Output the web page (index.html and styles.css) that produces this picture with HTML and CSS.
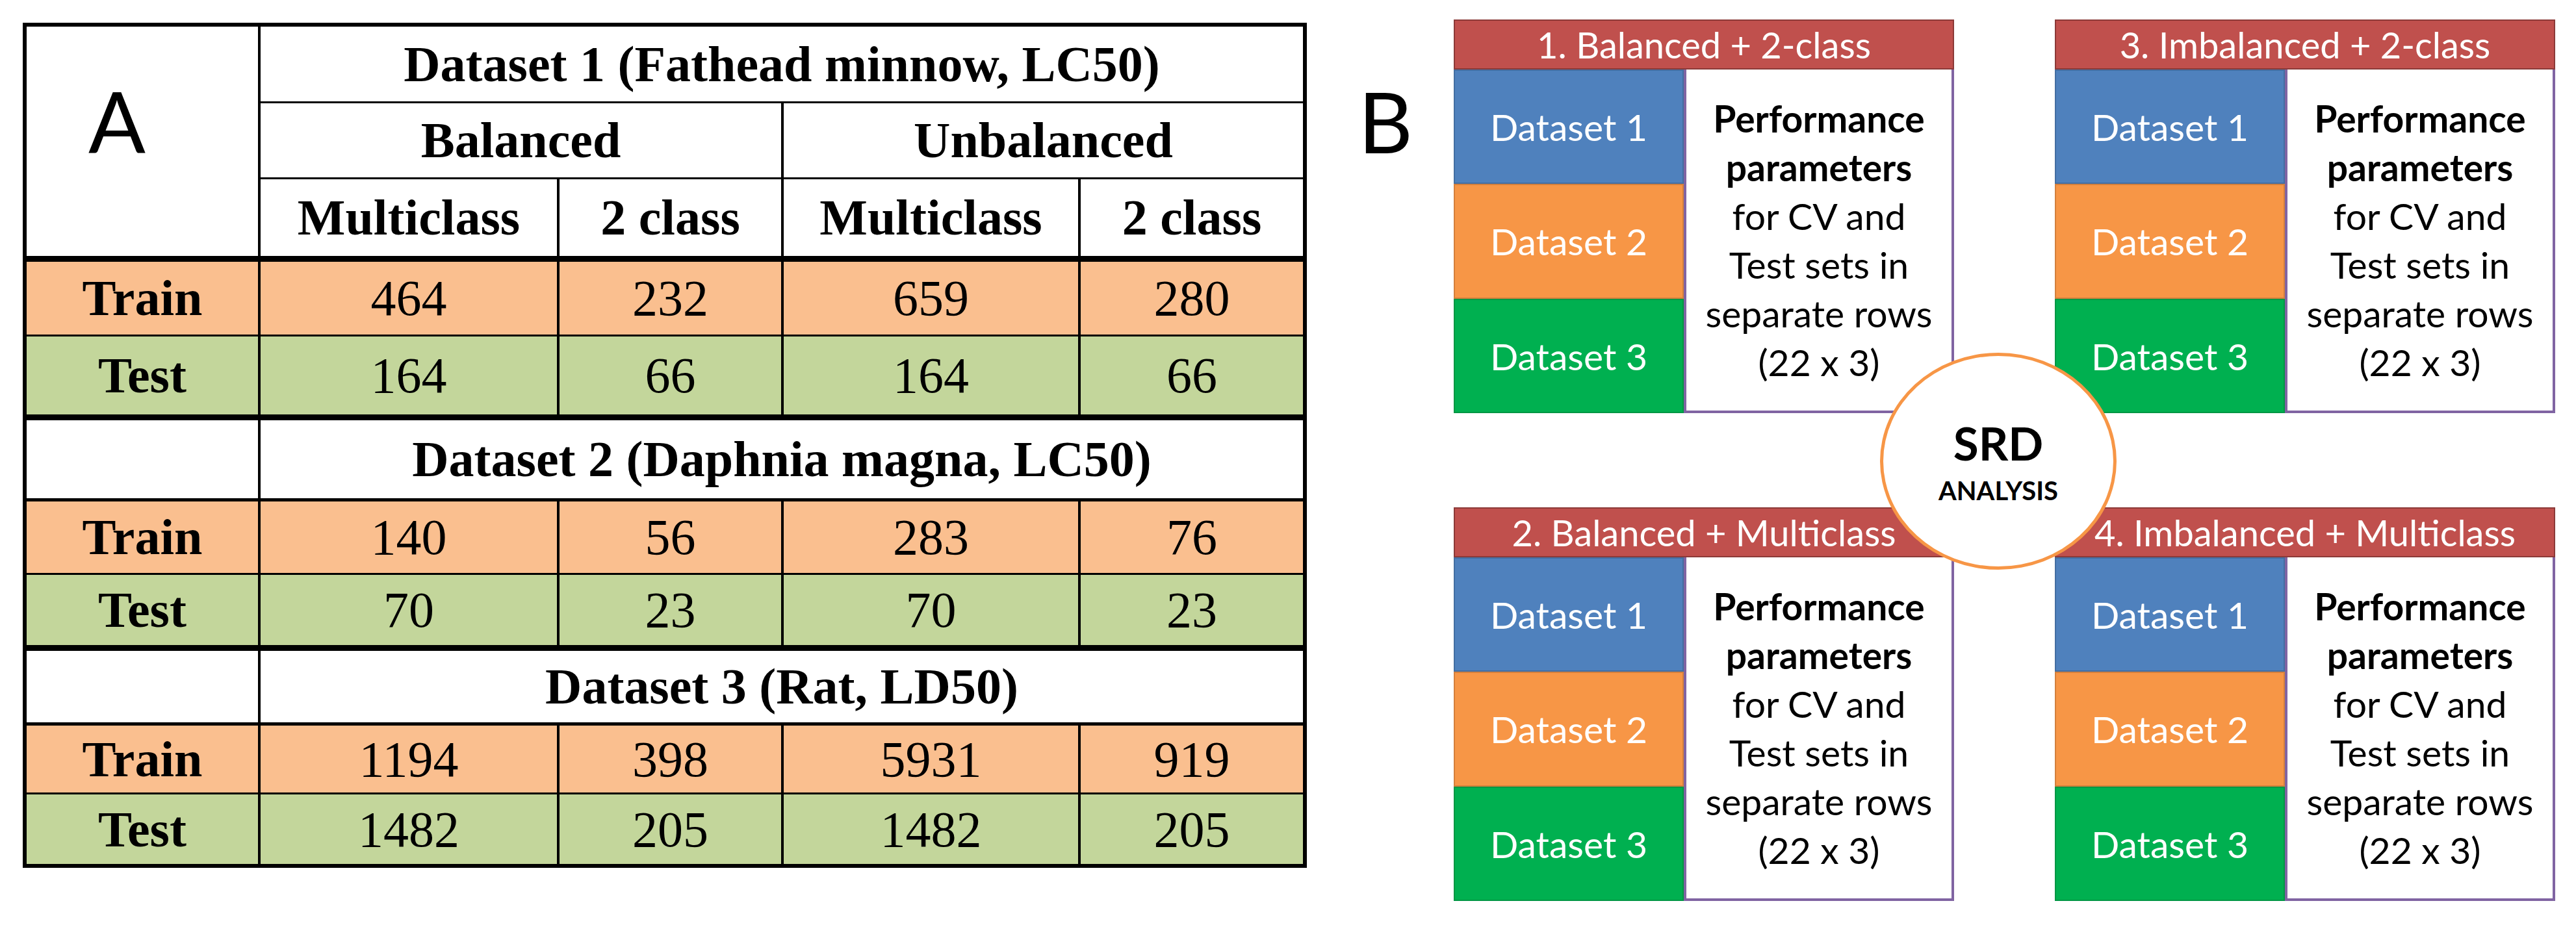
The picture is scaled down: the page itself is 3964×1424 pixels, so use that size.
FILE: index.html
```html
<!DOCTYPE html>
<html lang="en">
<head>
<meta charset="utf-8">
<title>Dataset table and SRD analysis</title>
<link rel="stylesheet" href="styles.css">
</head>
<body>
<div class="page">
  <div class="panel-a">
    <div class="tbl">
      <div class="c lbl-a">A</div>
      <div class="c h span4">Dataset 1 (Fathead minnow, LC50)</div>
      <div class="sep span4"></div>
      <div class="c h span2">Balanced</div>
      <div class="c h span2">Unbalanced</div>
      <div class="sep span4"></div>
      <div class="c h">Multiclass</div>
      <div class="c h">2 class</div>
      <div class="c h">Multiclass</div>
      <div class="c h">2 class</div>
      <div class="sep span5"></div>

      <div class="c h tr">Train</div><div class="c tr">464</div><div class="c tr">232</div><div class="c tr">659</div><div class="c tr">280</div>
      <div class="sep span5"></div>
      <div class="c h te">Test</div><div class="c te">164</div><div class="c te">66</div><div class="c te">164</div><div class="c te">66</div>
      <div class="sep span5"></div>

      <div class="c"></div>
      <div class="c h span4">Dataset 2 (Daphnia magna, LC50)</div>
      <div class="sep span5"></div>
      <div class="c h tr">Train</div><div class="c tr">140</div><div class="c tr">56</div><div class="c tr">283</div><div class="c tr">76</div>
      <div class="sep span5"></div>
      <div class="c h te">Test</div><div class="c te">70</div><div class="c te">23</div><div class="c te">70</div><div class="c te">23</div>
      <div class="sep span5"></div>

      <div class="c"></div>
      <div class="c h span4">Dataset 3 (Rat, LD50)</div>
      <div class="sep span5"></div>
      <div class="c h tr">Train</div><div class="c tr">1194</div><div class="c tr">398</div><div class="c tr">5931</div><div class="c tr">919</div>
      <div class="sep span5"></div>
      <div class="c h te">Test</div><div class="c te">1482</div><div class="c te">205</div><div class="c te">1482</div><div class="c te">205</div>
    </div>
  </div>

  <div class="label-b">B</div>

  <div class="diagram">
    <div class="box">
      <div class="bh">1. Balanced + 2-class</div>
      <div class="bb">
        <div class="stack">
          <div class="ds d1">Dataset 1</div>
          <div class="ds d2">Dataset 2</div>
          <div class="ds d3">Dataset 3</div>
        </div>
        <div class="perf"><p class="perf-t"><b>Performance<br>parameters</b><br>for CV and<br>Test sets in<br>separate rows<br>(22 x 3)</p></div>
      </div>
    </div>
    <div class="box">
      <div class="bh">3. Imbalanced + 2-class</div>
      <div class="bb">
        <div class="stack">
          <div class="ds d1">Dataset 1</div>
          <div class="ds d2">Dataset 2</div>
          <div class="ds d3">Dataset 3</div>
        </div>
        <div class="perf"><p class="perf-t"><b>Performance<br>parameters</b><br>for CV and<br>Test sets in<br>separate rows<br>(22 x 3)</p></div>
      </div>
    </div>
    <div class="box">
      <div class="bh">2. Balanced + Multiclass</div>
      <div class="bb">
        <div class="stack">
          <div class="ds d1">Dataset 1</div>
          <div class="ds d2">Dataset 2</div>
          <div class="ds d3">Dataset 3</div>
        </div>
        <div class="perf"><p class="perf-t"><b>Performance<br>parameters</b><br>for CV and<br>Test sets in<br>separate rows<br>(22 x 3)</p></div>
      </div>
    </div>
    <div class="box">
      <div class="bh">4. Imbalanced + Multiclass</div>
      <div class="bb">
        <div class="stack">
          <div class="ds d1">Dataset 1</div>
          <div class="ds d2">Dataset 2</div>
          <div class="ds d3">Dataset 3</div>
        </div>
        <div class="perf"><p class="perf-t"><b>Performance<br>parameters</b><br>for CV and<br>Test sets in<br>separate rows<br>(22 x 3)</p></div>
      </div>
    </div>

    <div class="srd">
      <div class="srd-t">SRD</div>
      <div class="srd-s">ANALYSIS</div>
    </div>
  </div>
</div>
</body>
</html>
```

FILE: styles.css
```css
html, body {
  margin: 0;
  padding: 0;
  background: #ffffff;
}

.page {
  width: 3964px;
  height: 1424px;
  display: flex;
  align-items: flex-start;
  padding: 30px 0 0 35px;
  box-sizing: border-box;
}

/* ---------- Panel A: table ---------- */
.panel-a {
  margin-top: 5px;
  flex: none;
}

.tbl {
  display: grid;
  grid-template-columns: 356px 456px 341px 453px 342px;
  grid-template-rows: 115px 3px 114px 3px 118px 9px 112px 3px 120px 9px 120px 5px 110px 3px 108px 9px 110px 5px 103px 3px 107px;
  column-gap: 4px;
  background: #000000;
  border: 6px solid #000000;
}

.c {
  background: #ffffff;
  display: flex;
  align-items: center;
  justify-content: center;
  font-family: "Liberation Serif", "Times New Roman", serif;
  font-size: 78px;
  line-height: 1;
  color: #000000;
  white-space: nowrap;
}

.h {
  font-weight: bold;
}

.tr {
  background: #fabf8f;
}

.te {
  background: #c3d69b;
}

.span2 {
  grid-column: span 2;
}

.span4 {
  grid-column: span 4;
}

.span5 {
  grid-column: span 5;
}

.sep {
  background: #000000;
}

.lbl-a {
  grid-row: span 5;
  align-items: flex-start;
  justify-content: flex-start;
  padding: 80px 0 0 95px;
  font-family: Lato, "Open Sans", sans-serif;
  font-size: 130px;
  font-weight: normal;
}

/* ---------- Panel B label ---------- */
.label-b {
  flex: none;
  width: 226px;
  box-sizing: border-box;
  padding-left: 79px;
  margin-top: 91px;
  font-family: Lato, "Open Sans", sans-serif;
  font-size: 130px;
  line-height: 1;
  color: #000000;
}

/* ---------- Panel B diagram ---------- */
.diagram {
  flex: none;
  position: relative;
  display: grid;
  grid-template-columns: 770px 770px;
  grid-template-rows: 606px 606px;
  column-gap: 155px;
  row-gap: 145px;
  font-family: Lato, "Open Sans", sans-serif;
}

.box {
  display: flex;
  flex-direction: column;
  min-width: 0;
  min-height: 0;
}

.bh {
  flex: none;
  height: 77px;
  box-sizing: border-box;
  background: #c0504d;
  border: 2px solid #8c3a38;
  color: #ffffff;
  font-size: 56px;
  display: flex;
  align-items: center;
  justify-content: center;
  white-space: nowrap;
}

.bb {
  flex: 1;
  min-height: 0;
  display: grid;
  grid-template-columns: 354px 416px;
}

.stack {
  display: flex;
  flex-direction: column;
}

.ds {
  flex: 1;
  display: flex;
  align-items: center;
  justify-content: center;
  color: #ffffff;
  font-size: 57px;
  box-shadow: inset 0 0 0 2px rgba(0, 0, 0, 0.14);
}

.d1 {
  background: #4f81bd;
}

.d2 {
  background: #f79646;
}

.d3 {
  background: #00b050;
}

.perf {
  box-sizing: border-box;
  border: 4px solid #8064a2;
  border-top: none;
  background: #ffffff;
  display: flex;
  align-items: center;
  justify-content: center;
}

.perf-t {
  margin: 0;
  text-align: center;
  font-size: 57px;
  line-height: 75px;
  color: #000000;
  white-space: nowrap;
}

.srd {
  position: absolute;
  left: 656px;
  top: 513px;
  width: 364px;
  height: 334px;
  box-sizing: border-box;
  border: 5px solid #f79646;
  border-radius: 50%;
  background: #ffffff;
  display: flex;
  flex-direction: column;
  align-items: center;
  justify-content: center;
  gap: 18px;
  font-weight: bold;
  color: #000000;
}

.srd-t {
  font-size: 71px;
  line-height: 1;
}

.srd-s {
  font-size: 40px;
  line-height: 1;
}
```
